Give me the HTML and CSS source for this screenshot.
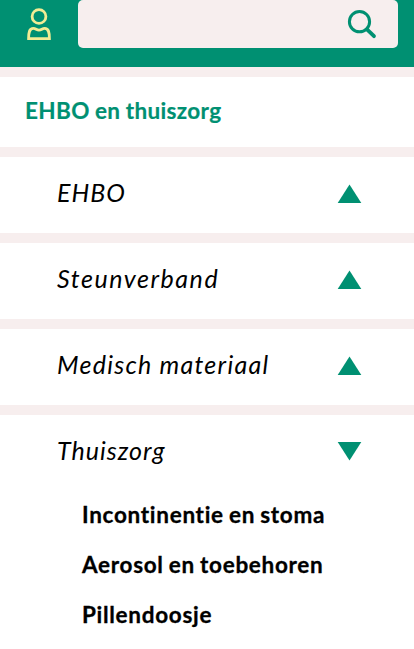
FILE: index.html
```html
<!DOCTYPE html>
<html lang="nl">
<head>
<meta charset="utf-8">
<title>EHBO en thuiszorg</title>
<link rel="stylesheet" href="styles.css">
</head>
<body>
<header class="header">
  <svg class="user" viewBox="0 0 26 34" fill="none" stroke="currentColor" stroke-width="2.8"><circle cx="13" cy="9.5" r="6.9"/><path d="M2.6 31.6 C2.6 25.5 3.2 21.4 7.4 21.4 C9.8 21.4 10.5 23.2 13 23.2 S16.2 21.4 18.6 21.4 C22.8 21.4 23.4 25.5 23.4 31.6 Z"/></svg>
  <div class="search">
    <svg class="lens" viewBox="0 0 30 30" fill="none" stroke="currentColor"><circle cx="12.5" cy="12.7" r="10.1" stroke-width="3"/><path d="M20 20.3 L27 27.2" stroke-width="3.8" stroke-linecap="round"/></svg>
  </div>
</header>
<main class="menu">
  <h1 class="title">EHBO en thuiszorg</h1>
  <section class="item"><span class="label label-ehbo">EHBO</span><svg class="arrow" viewBox="0 0 25 20"><path d="M12.5 .5 L24.3 18.9 H.7 Z"/></svg></section>
  <section class="item"><span class="label label-steunverband">Steunverband</span><svg class="arrow" viewBox="0 0 25 20"><path d="M12.5 .5 L24.3 18.9 H.7 Z"/></svg></section>
  <section class="item"><span class="label label-materiaal">Medisch materiaal</span><svg class="arrow" viewBox="0 0 25 20"><path d="M12.5 .5 L24.3 18.9 H.7 Z"/></svg></section>
  <section class="item"><span class="label label-thuiszorg">Thuiszorg</span><svg class="arrow" viewBox="0 0 25 20"><path d="M.7 0 H24.3 L12.5 18.4 Z"/></svg></section>
  <ul class="sub">
    <li>Incontinentie en stoma</li>
    <li>Aerosol en toebehoren</li>
    <li>Pillendoosje</li>
  </ul>
</main>
</body>
</html>
```
FILE: styles.css
```css
* { box-sizing: border-box; }
body { margin: 0; height: 649px; overflow: hidden; background: #fff; font-family: Lato, sans-serif; font-variant-ligatures: none; color: #000; }
.header { display: flex; height: 67px; padding-right: 16px; background: #009072; }
.user { width: 26px; height: 34px; margin: 7px 26px 0 26px; color: #f3ec94; flex: none; }
.search { flex: 1; height: 48px; border-radius: 5px; background: #f7eeee; display: flex; justify-content: flex-end; padding: 9px 21px 0 0; color: #009072; }
.lens { width: 30px; height: 30px; }
.title { margin: 0; height: 80px; border-top: 10px solid #f7eeee; padding-left: 25px; font-size: 22.5px; line-height: 67px; font-weight: 700; letter-spacing: .35px; word-spacing: -.5px; -webkit-text-stroke: .2px; color: #009072; }
.item { display: flex; justify-content: space-between; height: 86px; border-top: 10px solid #f7eeee; padding: 0 52px 0 57px; }
.label { font-size: 25px; line-height: 70px; font-style: italic; white-space: nowrap; }
.label-ehbo { letter-spacing: 1px; }
.label-steunverband { letter-spacing: 1.55px; }
.label-materiaal { letter-spacing: 1.25px; }
.label-thuiszorg { letter-spacing: 1px; }
.arrow { width: 25px; height: 20px; margin-top: 27px; fill: #009072; }
.sub { list-style: none; margin: -1px 0 0; padding: 0 0 0 82px; font-size: 22.5px; line-height: 50px; font-weight: 700; letter-spacing: .7px; word-spacing: -1px; -webkit-text-stroke: .3px; white-space: nowrap; }
```
